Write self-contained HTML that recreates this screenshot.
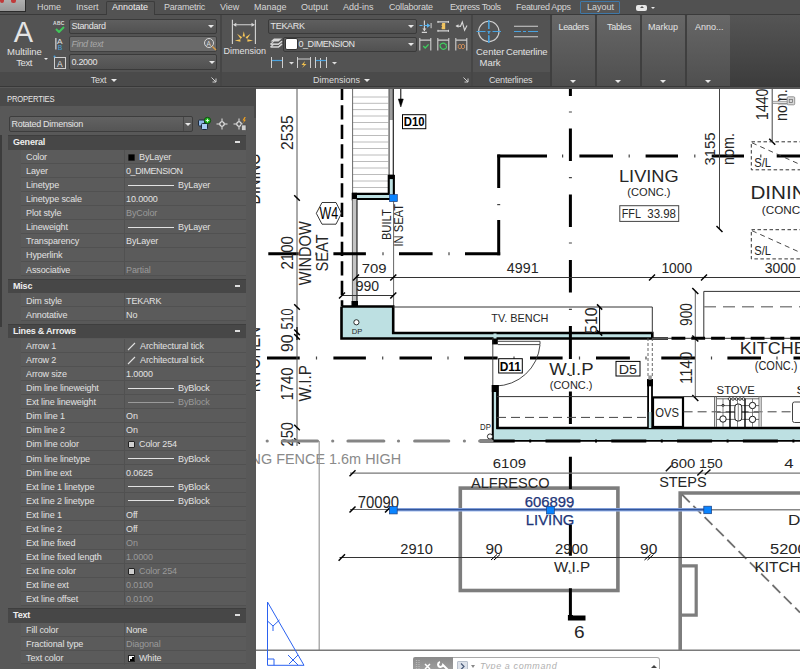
<!DOCTYPE html>
<html><head><meta charset="utf-8">
<style>
*{margin:0;padding:0;box-sizing:border-box}
html,body{width:800px;height:669px;overflow:hidden;background:#535353;font-family:"Liberation Sans",sans-serif;}
.a{position:absolute;white-space:nowrap}
#tabs{position:absolute;left:0;top:0;width:800px;height:15px;background:#515151;border-bottom:1px solid #3a3a3a}
.tab{position:absolute;top:2px;font-size:9px;color:#d6d6d6;line-height:11px}
#ribbon{position:absolute;left:0;top:15px;width:800px;height:73px;background:#535353}
.ptitle{position:absolute;top:57px;height:14px;background:#4a4a4a}
.pt{position:absolute;font-size:9px;color:#dcdcdc;line-height:10px}
.dd{position:absolute;height:15px;background:linear-gradient(#5f5f5f,#515151);border:1px solid #3a3a3a;border-radius:2px;font-size:9px;color:#e6e6e6;line-height:13px;padding-left:1.5px;letter-spacing:-0.3px}
.arr{position:absolute;width:0;height:0;border-left:3px solid transparent;border-right:3px solid transparent;border-top:3px solid #e8e8e8}
.cp{position:absolute;top:0;height:71px;background:linear-gradient(#676767,#4f4f4f);border-radius:1px}
#props{position:absolute;left:0;top:88px;width:256px;height:581px;background:#575757}
.row{position:absolute;white-space:nowrap;left:21px;width:225px;height:14px;border-bottom:1px solid #515151;background:#5b5b5b}
.row .l{position:absolute;left:5px;top:1.5px;font-size:9px;color:#e2e2e2;line-height:12px;letter-spacing:-0.12px}
.row .v{position:absolute;left:105px;top:1.5px;font-size:9px;color:#e2e2e2;line-height:12px;letter-spacing:-0.12px}
.row .sp{position:absolute;left:103px;top:0;width:1px;height:14px;background:#515151}
.row .g{color:#9a9a9a}
.hdr{position:absolute;left:8px;width:238px;height:14px;letter-spacing:-0.2px;background:#474747;box-shadow:inset 0 1px 0 #3e3e3e;font-size:9px;font-weight:bold;color:#eeeeee;line-height:14px;padding-left:5px}
.hdr b{position:absolute;right:6px;top:6px;width:5px;height:1.5px;background:#ddd}
</style></head><body>

<!-- TAB BAR -->
<div id="tabs">
  <div class="a" style="left:0;top:0;width:26px;height:12px;background:linear-gradient(#b0b0b0,#999);border-right:1px solid #2b2b2b;border-bottom:1px solid #2b2b2b"></div>
  <div class="a" style="left:0;top:0;width:4px;height:3px;background:#c03a3a;border-radius:0 0 2px 2px"></div>
  <div class="a" style="left:11px;top:0;width:5px;height:3px;background:#c03a3a;border-radius:0 0 2px 2px"></div>
  <div class="tab" style="left:37px">Home</div>
  <div class="tab" style="left:76px">Insert</div>
  <div class="a" style="left:106px;top:1px;width:49px;height:14px;background:#535353;border:1px solid #3c3c3c;border-bottom:none;border-radius:2px 2px 0 0"></div>
  <div class="tab" style="left:112px;color:#f0f0f0">Annotate</div>
  <div class="tab" style="left:164px;letter-spacing:-0.25px">Parametric</div>
  <div class="tab" style="left:220px">View</div>
  <div class="tab" style="left:254px">Manage</div>
  <div class="tab" style="left:301px">Output</div>
  <div class="tab" style="left:343px">Add-ins</div>
  <div class="tab" style="left:389px;letter-spacing:-0.2px">Collaborate</div>
  <div class="tab" style="left:450px;letter-spacing:-0.4px">Express Tools</div>
  <div class="tab" style="left:516px;letter-spacing:-0.3px">Featured Apps</div>
  <div class="a" style="left:580px;top:1px;width:40px;height:13px;background:#565656;border:1px solid #3f78a8;border-radius:1px"></div>
  <div class="tab" style="left:587px">Layout</div>
  <div class="a" style="left:636px;top:5px;width:11px;height:6px;background:#e8e8e8;border-radius:2px"></div>
  <div class="a" style="left:640px;top:6px;width:0;height:0;border-left:2px solid transparent;border-right:2px solid transparent;border-bottom:2px solid #555"></div>
  <div class="arr" style="left:651px;top:7px;border-left-width:2px;border-right-width:2px;border-top-width:2px"></div>
</div>

<!-- RIBBON -->
<div id="ribbon">
  <!-- Text panel -->
  <div class="a" style="left:0;top:57px;width:220px;height:14px;background:#4a4a4a"></div>
  <div class="a" style="left:13.7px;top:2.8px;font-size:29px;line-height:29px;color:#e4e4e4">A</div>
  <div class="a" style="left:7px;top:32px;font-size:9.5px;line-height:9.5px;color:#e2e2e2">Multiline</div>
  <div class="a" style="left:16.3px;top:43px;font-size:9.5px;line-height:9.5px;color:#e2e2e2;letter-spacing:-0.45px">Text</div>
  <div class="arr" style="left:43.8px;top:42.5px;border-left-width:2.2px;border-right-width:2.2px;border-top-width:2.5px"></div>
  <div class="a" style="left:53px;top:6px;font-size:5px;line-height:5px;font-weight:bold;color:#dcdcdc;letter-spacing:0.3px">ABC</div>
  <svg class="a" style="left:55px;top:11px" width="10" height="7"><path d="M1 3 L4 6 L9 1" stroke="#3fc85a" stroke-width="2" fill="none"/></svg>
  <div class="dd" style="left:69px;top:3.9px;width:148px;height:15.5px">Standard</div>
  <div class="arr" style="left:208px;top:10px;border-left-width:3.5px;border-right-width:3.5px;border-top-width:3.5px"></div>
  <svg class="a" style="left:54px;top:22px" width="12" height="15"><rect x="1.2" y="1" width="1.3" height="11.5" fill="#cfcfcf"/><text x="3" y="7.2" font-size="7.6" fill="#e0e0e0" font-family="Liberation Sans" textLength="5.5" lengthAdjust="spacingAndGlyphs">A</text><text x="3.8" y="12.6" font-size="7.4" fill="#4aa3df" font-family="Liberation Sans" textLength="4.5" lengthAdjust="spacingAndGlyphs">B</text></svg>
  <div class="dd" style="left:69px;top:21.3px;width:148px;height:15.8px;line-height:14px;background:#6a6a6a;border-color:#404040;color:#a8a8a8;font-style:italic">Find text</div>
  <svg class="a" style="left:203px;top:21.5px" width="14" height="14"><circle cx="6" cy="6" r="4.5" stroke="#d8d8d8" stroke-width="1" fill="none"/><text x="3.5" y="8.5" font-size="6.5" fill="#d8d8d8" font-family="Liberation Sans">A</text><path d="M9.5 9.5 L13 13" stroke="#d79a46" stroke-width="1.5"/></svg>
  <svg class="a" style="left:53px;top:40px" width="14" height="15"><rect x="1.5" y="2.5" width="11" height="11" stroke="#cfcfcf" stroke-width="1" fill="none"/><text x="4" y="11.5" font-size="8.5" fill="#e0e0e0" font-family="Liberation Sans">A</text><circle cx="1.5" cy="1.5" r="1" fill="#4aa3df"/></svg>
  <div class="dd" style="left:69px;top:39.2px;width:148px;height:15.8px;line-height:14px">0.2000</div>
  <div class="arr" style="left:209px;top:46px;border-left-width:3.5px;border-right-width:3.5px;border-top-width:3.5px"></div>
  <div class="pt" style="left:90.8px;top:60px;letter-spacing:-0.3px">Text</div>
  <div class="arr" style="left:111px;top:64px"></div>
  <svg class="a" style="left:211px;top:62px" width="6" height="6"><path d="M0.5 0.5 L5 5 M5 1.5 L5 5 L1.5 5" stroke="#cfcfcf" stroke-width="1" fill="none"/></svg>
  <div class="a" style="left:220px;top:0;width:2px;height:71px;background:#464646"></div>

  <!-- Dimensions panel -->
  <div class="a" style="left:222px;top:57px;width:250px;height:14px;background:#4a4a4a"></div>
  <svg class="a" style="left:230px;top:4px" width="28" height="26">
    <path d="M2.4 0.7 V24.9 M25.4 0.7 V24.9 M4 5.75 H24" stroke="#d4d4d4" stroke-width="1.1" fill="none"/>
    <path d="M2.9 5.75 l3.4 -2 v4z M24.9 5.75 l-3.4 -2 v4z" fill="#d4d4d4"/>
    <path d="M13.8 12.2 L12.6 17.6 H15 Z M7.1 14.8 L10.6 19.9 L12.1 18.2 Z M20.6 14.8 L17.1 19.9 L15.6 18.2 Z M4.8 21.5 L10.4 20.3 V22.7 Z M23 21.5 L17.4 20.3 V22.7 Z" fill="#f5c65a"/>
  </svg>
  <div class="a" style="left:223.5px;top:32.3px;font-size:9px;line-height:9px;color:#e2e2e2">Dimension</div>
  <div class="dd" style="left:268px;top:3.9px;width:149px;height:15.5px">TEKARK</div>
  <div class="arr" style="left:408px;top:10px;border-left-width:3.5px;border-right-width:3.5px;border-top-width:3.5px"></div>
  <svg class="a" style="left:269px;top:22px" width="14" height="13"><path d="M1.5 4.5 L5 1.5 H13 L9.5 4.5 Z" fill="#d8d8d8"/><path d="M1.5 7.2 L5 4.2 M9.5 7.2 L13 4.2 M1.5 7.2 H9.5 M1.5 10 L5 7 M9.5 10 L13 7 M1.5 10 H9.5" stroke="#d0d0d0" stroke-width="1.1" fill="none"/><path d="M1.5 7.2 H9.5 L13 4.2 M1.5 10 H9.5 L13 7" stroke="#d8d8d8" stroke-width="1.2" fill="none"/></svg>
  <div class="dd" style="left:283px;top:21.5px;width:134px;padding-left:14.5px;letter-spacing:-0.45px">0_DIMENSION</div>
  <div class="a" style="left:285px;top:23px;width:12.5px;height:12px;background:#fff;border:1px solid #333;border-radius:2px"></div>
  <div class="arr" style="left:408px;top:28px;border-left-width:3.5px;border-right-width:3.5px;border-top-width:3.5px"></div>
  <svg class="a" style="left:270px;top:41px" width="70" height="13">
    <path d="M1.5 1 V12 M12.5 1 V12 M2 4.5 H12" stroke="#cfcfcf" stroke-width="1" fill="none"/>
    <path d="M2 4.5 H12" stroke="#4aa3df" stroke-width="1.2"/>
    <path d="M19 6 h5 l-2.5 2.5z" fill="#dcdcdc"/>
    <path d="M27.5 1 V12 M40.5 1 V12 M28 3 H40" stroke="#cfcfcf" stroke-width="1" fill="none"/>
    <path d="M35 5 L31.5 9 L34 9 L32 12 L36.5 8 L34 8 Z" fill="#f2c14e"/>
    <path d="M45.5 1 V12 M56.5 1 V12 M50.5 2 V12 M46 4.5 H56" stroke="#cfcfcf" stroke-width="1" fill="none"/>
    <path d="M46 4.5 H56" stroke="#4aa3df" stroke-width="1.2"/>
    <path d="M62 6 h5 l-2.5 2.5z" fill="#dcdcdc"/>
  </svg>
  <svg class="a" style="left:419px;top:5px" width="50" height="32">
    <path d="M5.4 0.6 V11 M2.8 12.4 H8" stroke="#d4d4d4" stroke-width="1.1" fill="none"/>
    <path d="M3.4 8.6 H7.4 L5.4 11 Z" fill="#d4d4d4"/>
    <path d="M0.5 5.5 H3.5 M5 5.5 H9" stroke="#5ab4f0" stroke-width="1.1" fill="none"/>
    <path d="M11.3 5.5 L8 3.3 V7.7 Z" fill="#5ab4f0"/>
    <path d="M12.1 3 V8.2" stroke="#d4d4d4" stroke-width="1"/>
    <path d="M18.5 1.9 H30 M18.5 10.8 H30" stroke="#d4d4d4" stroke-width="1.2" fill="none"/>
    <path d="M19 0.9 V2.9 M29.5 0.9 V2.9 M19 9.8 V11.8 M29.5 9.8 V11.8" stroke="#d4d4d4" stroke-width="1"/>
    <path d="M23 2.9 H26.2 V9.3 H23 L22.4 8 L23.2 6.6 L22.4 5.2 L23.2 3.9 Z" fill="#f2c560"/>
    <path d="M37.5 6 L41.5 6.3 L43.3 2 L45.6 10.2 L48 5.5" stroke="#d8d8d8" stroke-width="1.1" fill="none"/>
    <path d="M36.5 6 L39.5 4.3 V7.7 Z" fill="#d8d8d8"/>
    <path d="M0.8 18 V30.5 M11.8 18 V30.5 M1 20.1 H11.6" stroke="#cfcfcf" stroke-width="1.1" fill="none"/>
    <path d="M4.2 26 L6.2 28 L9.6 24.4" stroke="#3fcf5f" stroke-width="1.3" fill="none"/>
    <path d="M18.8 18 V30.5 M29.8 18 V30.5 M19 20.1 H29.6" stroke="#cfcfcf" stroke-width="1.1" fill="none"/>
    <path d="M21.5 27 A3 2.4 0 0 1 26.5 24.3 M27 25.5 A3 2.4 0 0 1 22 28.2" stroke="#3fcf5f" stroke-width="1.1" fill="none"/>
    <circle cx="21.6" cy="27.3" r="0.9" fill="#3fcf5f"/><circle cx="26.9" cy="24.6" r="0.9" fill="#3fcf5f"/>
    <path d="M36.8 18 V30.5 M47.8 18 V30.5 M37 20.1 H47.6" stroke="#cfcfcf" stroke-width="1.1" fill="none"/>
    <path d="M39.3 26.5 a1.7 1.5 0 1 1 3.1 0 a1.7 1.5 0 1 1 -3.1 0 M42.4 26.5 a1.7 1.5 0 1 1 3.1 0 a1.7 1.5 0 1 1 -3.1 0" stroke="#d9935a" stroke-width="1" fill="none"/>
  </svg>
  <div class="pt" style="left:313px;top:60px">Dimensions</div>
  <div class="arr" style="left:364px;top:64px"></div>
  <svg class="a" style="left:463px;top:62px" width="6" height="6"><path d="M0.5 0.5 L5 5 M5 1.5 L5 5 L1.5 5" stroke="#cfcfcf" stroke-width="1" fill="none"/></svg>
  <div class="a" style="left:471px;top:0;width:2px;height:71px;background:#464646"></div>

  <!-- Centerlines panel -->
  <div class="a" style="left:473px;top:57px;width:77px;height:14px;background:#4a4a4a"></div>
  <svg class="a" style="left:475px;top:4px" width="75" height="26">
    <circle cx="13.8" cy="12.5" r="10.2" stroke="#cfcfcf" stroke-width="1.1" fill="none"/>
    <path d="M1.5 12.5 H26 M13.8 1 V24" stroke="#4aa3df" stroke-width="1.2" stroke-dasharray="9 2 3 2 9" fill="none"/>
    <path d="M13.8 1 V24" stroke="#4aa3df" stroke-width="1.2" stroke-dasharray="9 2 2 2 9" fill="none"/>
    <path d="M39 7.2 H63 M39 17.7 H63" stroke="#d0d0d0" stroke-width="1.1" fill="none"/>
    <path d="M39 12.5 H63" stroke="#4aa3df" stroke-width="1.1" stroke-dasharray="7 2 3 2 10" fill="none"/>
  </svg>
  <div class="a" style="left:476px;top:32px;font-size:9.5px;line-height:9.5px;color:#e2e2e2">Center</div>
  <div class="a" style="left:479.5px;top:43px;font-size:9.5px;line-height:9.5px;color:#e2e2e2">Mark</div>
  <div class="a" style="left:506px;top:32px;font-size:9.5px;line-height:9.5px;color:#e2e2e2;letter-spacing:-0.2px">Centerline</div>
  <div class="pt" style="left:489px;top:60px;letter-spacing:-0.2px">Centerlines</div>

  <!-- collapsed panels -->
  <div class="a" style="left:549.5px;top:0;width:2px;height:71px;background:#3f3f3f"></div>
  <div class="cp" style="left:551.5px;width:43px"></div>
  <div class="a" style="left:594.6px;top:0;width:2px;height:71px;background:#3f3f3f"></div>
  <div class="cp" style="left:596.6px;width:43.7px"></div>
  <div class="a" style="left:640.3px;top:0;width:1.3px;height:71px;background:#3f3f3f"></div>
  <div class="cp" style="left:641.6px;width:43.7px"></div>
  <div class="a" style="left:685.3px;top:0;width:1.7px;height:71px;background:#3f3f3f"></div>
  <div class="cp" style="left:687px;width:43.3px"></div>
  <div class="a" style="left:730.3px;top:0;width:70px;height:71px;background:linear-gradient(#555,#3c3c3c)"></div>
  <div class="pt" style="left:558.5px;top:7px;color:#e4e4e4;letter-spacing:-0.35px">Leaders</div>
  <div class="pt" style="left:607px;top:7px;color:#e4e4e4;letter-spacing:-0.3px">Tables</div>
  <div class="pt" style="left:648px;top:7px;color:#e4e4e4">Markup</div>
  <div class="pt" style="left:695px;top:7px;color:#e4e4e4">Anno...</div>
  <div class="arr" style="left:570px;top:65px"></div>
  <div class="arr" style="left:615px;top:65px"></div>
  <div class="arr" style="left:660px;top:65px"></div>
  <div class="arr" style="left:705px;top:65px"></div>
  <div class="a" style="left:0;top:71px;width:800px;height:1px;background:#383838"></div>
  <div class="a" style="left:0;top:72px;width:800px;height:2px;background:#575757"></div>
</div>

<!-- PROPERTIES -->
<div id="props">
<div class="a" style="left:0;top:0;width:256px;height:18px;background:#4a4a4a"></div>
<div class="a" style="left:7px;top:5.5px;font-size:9px;line-height:10px;color:#e6e6e6;letter-spacing:-0.2px;transform:scaleX(0.85);transform-origin:0 0">PROPERTIES</div>
<div class="a" style="left:0;top:18px;width:254px;height:563px;background:#585858;border-radius:3px 3px 0 0"></div>
<div class="a" style="left:254px;top:0;width:2px;height:30px;background:#4a4a4a"></div>
<div class="a" style="left:0;top:47px;width:1.5px;height:192px;background:#3c3c3c"></div>
<div class="dd" style="left:8.5px;top:28px;width:184px;height:16px;line-height:14px;padding-left:2px;background:linear-gradient(#626262,#555);border-color:#3d3d3d;color:#e4e4e4;letter-spacing:-0.3px">Rotated Dimension</div>
<div class="a" style="left:183px;top:29px;width:1px;height:14px;background:#474747"></div>
<div class="arr" style="left:185px;top:35px"></div>
<svg class="a" style="left:196px;top:28px" width="56" height="16">
 <rect x="2.5" y="4" width="6" height="6" rx="1" fill="#8fb7e8" stroke="#1d2a3a" stroke-width="1"/>
 <rect x="5.5" y="7.5" width="6" height="6" rx="1" fill="#a9cbf2" stroke="#1d2a3a" stroke-width="1"/>
 <circle cx="11.5" cy="4.5" r="3.2" fill="#1db31d" stroke="#0c3a0c" stroke-width="0.8"/>
 <path d="M11.5 2.8 v3.4 M9.8 4.5 h3.4" stroke="#eaffea" stroke-width="0.9"/>
 <circle cx="26" cy="8" r="2.2" fill="none" stroke="#e6e6e6" stroke-width="1.1"/>
 <path d="M20.5 8 h3.3 M28.2 8 h3.3 M26 2.5 v3.3 M26 10.2 v3.3" stroke="#e6e6e6" stroke-width="1"/>
 <circle cx="43" cy="8" r="2.2" fill="none" stroke="#e6e6e6" stroke-width="1.1"/>
 <path d="M37.5 8 h3.3 M45.2 8 h1.5 M43 2.5 v3.3 M43 10.2 v3.3" stroke="#e6e6e6" stroke-width="1"/>
 <path d="M48.5 1 L46.5 4.5 L48.2 4.5 L46.8 7.5 L50 3.8 L48.4 3.8 L49.8 1 Z" fill="#f0a020"/>
 <rect x="45.5" y="9" width="4.5" height="5.5" fill="#cfcfcf" stroke="#444" stroke-width="0.6"/>
</svg>
<div class="hdr" style="top:47.00px;height:14.50px;line-height:14.50px">General<b></b></div>
<div class="row" style="top:61.50px;height:14.07px"><span class="l">Color</span><span class="sp"></span><span class="v"><span style="position:absolute;left:2px;top:2.5px;width:7px;height:7px;background:#000;border:1px solid #222;border-radius:1px"></span><span style="position:absolute;left:13px;color:#e2e2e2">ByLayer</span></span></div>
<div class="row" style="top:75.57px;height:14.07px"><span class="l">Layer</span><span class="sp"></span><span class="v" style="letter-spacing:-0.4px">0_DIMENSION</span></div>
<div class="row" style="top:89.64px;height:14.07px"><span class="l">Linetype</span><span class="sp"></span><span class="v"><span style="position:absolute;left:2px;top:5.5px;width:46px;height:1px;background:#e2e2e2"></span><span style="position:absolute;left:52px;color:#e2e2e2">ByLayer</span></span></div>
<div class="row" style="top:103.71px;height:14.07px"><span class="l">Linetype scale</span><span class="sp"></span><span class="v">10.0000</span></div>
<div class="row" style="top:117.78px;height:14.07px"><span class="l">Plot style</span><span class="sp"></span><span class="v"><span class="g">ByColor</span></span></div>
<div class="row" style="top:131.85px;height:14.07px"><span class="l">Lineweight</span><span class="sp"></span><span class="v"><span style="position:absolute;left:2px;top:5.5px;width:46px;height:1px;background:#e2e2e2"></span><span style="position:absolute;left:52px;color:#e2e2e2">ByLayer</span></span></div>
<div class="row" style="top:145.92px;height:14.07px"><span class="l">Transparency</span><span class="sp"></span><span class="v">ByLayer</span></div>
<div class="row" style="top:159.99px;height:14.07px"><span class="l">Hyperlink</span><span class="sp"></span><span class="v"></span></div>
<div class="row" style="top:174.06px;height:14.07px"><span class="l">Associative</span><span class="sp"></span><span class="v"><span class="g">Partial</span></span></div>
<div class="hdr" style="top:191.20px;height:14.10px;line-height:14.10px">Misc<b></b></div>
<div class="row" style="top:205.30px;height:14.07px"><span class="l">Dim style</span><span class="sp"></span><span class="v">TEKARK</span></div>
<div class="row" style="top:219.37px;height:14.07px"><span class="l">Annotative</span><span class="sp"></span><span class="v">No</span></div>
<div class="hdr" style="top:236.30px;height:14.20px;line-height:14.20px">Lines &amp; Arrows<b></b></div>
<div class="row" style="top:250.50px;height:14.07px"><span class="l">Arrow 1</span><span class="sp"></span><span class="v"><svg style="position:absolute;left:1px;top:2px" width="10" height="9"><path d="M1 8 L8 1" stroke="#e2e2e2" stroke-width="1.1"/></svg><span style="position:absolute;left:14px">Architectural tick</span></span></div>
<div class="row" style="top:264.57px;height:14.07px"><span class="l">Arrow 2</span><span class="sp"></span><span class="v"><svg style="position:absolute;left:1px;top:2px" width="10" height="9"><path d="M1 8 L8 1" stroke="#e2e2e2" stroke-width="1.1"/></svg><span style="position:absolute;left:14px">Architectural tick</span></span></div>
<div class="row" style="top:278.64px;height:14.07px"><span class="l">Arrow size</span><span class="sp"></span><span class="v">1.0000</span></div>
<div class="row" style="top:292.71px;height:14.07px"><span class="l">Dim line lineweight</span><span class="sp"></span><span class="v"><span style="position:absolute;left:2px;top:5.5px;width:46px;height:1px;background:#e2e2e2"></span><span style="position:absolute;left:52px;color:#e2e2e2">ByBlock</span></span></div>
<div class="row" style="top:306.78px;height:14.07px"><span class="l">Ext line lineweight</span><span class="sp"></span><span class="v"><span style="position:absolute;left:2px;top:5.5px;width:46px;height:1px;background:#9a9a9a"></span><span style="position:absolute;left:52px;color:#9a9a9a">ByBlock</span></span></div>
<div class="row" style="top:320.85px;height:14.07px"><span class="l">Dim line 1</span><span class="sp"></span><span class="v">On</span></div>
<div class="row" style="top:334.92px;height:14.07px"><span class="l">Dim line 2</span><span class="sp"></span><span class="v">On</span></div>
<div class="row" style="top:348.99px;height:14.07px"><span class="l">Dim line color</span><span class="sp"></span><span class="v"><span style="position:absolute;left:2px;top:2.5px;width:7px;height:7px;background:#d0d0d0;border:1px solid #222;border-radius:1px"></span><span style="position:absolute;left:13px;color:#e2e2e2">Color 254</span></span></div>
<div class="row" style="top:363.06px;height:14.07px"><span class="l">Dim line linetype</span><span class="sp"></span><span class="v"><span style="position:absolute;left:2px;top:5.5px;width:46px;height:1px;background:#e2e2e2"></span><span style="position:absolute;left:52px;color:#e2e2e2">ByBlock</span></span></div>
<div class="row" style="top:377.13px;height:14.07px"><span class="l">Dim line ext</span><span class="sp"></span><span class="v">0.0625</span></div>
<div class="row" style="top:391.20px;height:14.07px"><span class="l">Ext line 1 linetype</span><span class="sp"></span><span class="v"><span style="position:absolute;left:2px;top:5.5px;width:46px;height:1px;background:#e2e2e2"></span><span style="position:absolute;left:52px;color:#e2e2e2">ByBlock</span></span></div>
<div class="row" style="top:405.27px;height:14.07px"><span class="l">Ext line 2 linetype</span><span class="sp"></span><span class="v"><span style="position:absolute;left:2px;top:5.5px;width:46px;height:1px;background:#e2e2e2"></span><span style="position:absolute;left:52px;color:#e2e2e2">ByBlock</span></span></div>
<div class="row" style="top:419.34px;height:14.07px"><span class="l">Ext line 1</span><span class="sp"></span><span class="v">Off</span></div>
<div class="row" style="top:433.41px;height:14.07px"><span class="l">Ext line 2</span><span class="sp"></span><span class="v">Off</span></div>
<div class="row" style="top:447.48px;height:14.07px"><span class="l">Ext line fixed</span><span class="sp"></span><span class="v"><span class="g">On</span></span></div>
<div class="row" style="top:461.55px;height:14.07px"><span class="l">Ext line fixed length</span><span class="sp"></span><span class="v"><span class="g">1.0000</span></span></div>
<div class="row" style="top:475.62px;height:14.07px"><span class="l">Ext line color</span><span class="sp"></span><span class="v"><span style="position:absolute;left:2px;top:2.5px;width:7px;height:7px;background:#cfcfcf;border:1px solid #222;border-radius:1px"></span><span style="position:absolute;left:13px;color:#9a9a9a">Color 254</span></span></div>
<div class="row" style="top:489.69px;height:14.07px"><span class="l">Ext line ext</span><span class="sp"></span><span class="v"><span class="g">0.0100</span></span></div>
<div class="row" style="top:503.76px;height:14.07px"><span class="l">Ext line offset</span><span class="sp"></span><span class="v"><span class="g">0.0100</span></span></div>
<div class="hdr" style="top:520.40px;height:14.30px;line-height:14.30px">Text<b></b></div>
<div class="row" style="top:534.70px;height:13.93px"><span class="l">Fill color</span><span class="sp"></span><span class="v">None</span></div>
<div class="row" style="top:548.63px;height:13.93px"><span class="l">Fractional type</span><span class="sp"></span><span class="v"><span class="g">Diagonal</span></span></div>
<div class="row" style="top:562.56px;height:13.93px"><span class="l">Text color</span><span class="sp"></span><span class="v"><span style="position:absolute;left:2px;top:2.5px;width:7px;height:7px;background:linear-gradient(135deg,#fff 50%,#000 50%);border:1px solid #222"></span><span style="position:absolute;left:13px">White</span></span></div>
</div>

<!-- DRAWING -->
<div class="a" style="left:256px;top:89px;width:544px;height:580px;background:#fff;overflow:hidden">
<!--DRAW-->
<svg class="a" style="left:0;top:0" width="544" height="580" viewBox="256 89 544 580" font-family="Liberation Sans">
<rect x="341.5" y="306.5" width="51.7" height="32" fill="#bde0e2" stroke="none" stroke-width="1" />
<rect x="393" y="333" width="259.5" height="5.5" fill="#bde0e2" stroke="none" stroke-width="1" />
<rect x="352.4" y="194" width="40" height="5.5" fill="#bde0e2" stroke="none" stroke-width="1" />
<rect x="389.5" y="176" width="3.5" height="20" fill="#bde0e2" stroke="none" stroke-width="1" />
<rect x="492.5" y="428" width="307.5" height="13" fill="#bde0e2" stroke="none" stroke-width="1" />
<rect x="492.5" y="385" width="5" height="43" fill="#bde0e2" stroke="none" stroke-width="1" />
<rect x="460.3" y="488.1" width="157.6" height="102.4" fill="none" stroke="#7d7d7d" stroke-width="3.6" />
<path d="M680.2 650 V493 H800" stroke="#7d7d7d" stroke-width="3.6" fill="none" />
<path d="M680.2 565.8 H696.2 V615.2 H680.2" stroke="#7d7d7d" stroke-width="3.2" fill="none" />
<path d="M682 494.5 L800 612.5" stroke="#707070" stroke-width="1.8" fill="none" stroke-dasharray="11 5"/>
<line x1="352.5" y1="97" x2="388.5" y2="97" stroke="#bcbcbc" stroke-width="1" />
<line x1="352.5" y1="103.3" x2="388.5" y2="103.3" stroke="#bcbcbc" stroke-width="1" />
<line x1="352.5" y1="109.6" x2="388.5" y2="109.6" stroke="#bcbcbc" stroke-width="1" />
<line x1="352.5" y1="116" x2="388.5" y2="116" stroke="#bcbcbc" stroke-width="1" />
<line x1="352.5" y1="122.5" x2="388.5" y2="122.5" stroke="#bcbcbc" stroke-width="1" />
<line x1="352.5" y1="129" x2="388.5" y2="129" stroke="#bcbcbc" stroke-width="1" />
<line x1="352.5" y1="135.5" x2="388.5" y2="135.5" stroke="#bcbcbc" stroke-width="1" />
<line x1="352.5" y1="142" x2="388.5" y2="142" stroke="#bcbcbc" stroke-width="1" />
<line x1="352.5" y1="148.5" x2="388.5" y2="148.5" stroke="#bcbcbc" stroke-width="1" />
<line x1="352.5" y1="155" x2="388.5" y2="155" stroke="#bcbcbc" stroke-width="1" />
<line x1="352.5" y1="161.5" x2="388.5" y2="161.5" stroke="#bcbcbc" stroke-width="1" />
<line x1="352.5" y1="168" x2="388.5" y2="168" stroke="#bcbcbc" stroke-width="1" />
<line x1="352.5" y1="174.5" x2="388.5" y2="174.5" stroke="#bcbcbc" stroke-width="1" />
<line x1="352.5" y1="181" x2="388.5" y2="181" stroke="#bcbcbc" stroke-width="1" />
<line x1="352.5" y1="187.5" x2="388.5" y2="187.5" stroke="#bcbcbc" stroke-width="1" />
<line x1="352.6" y1="89" x2="352.6" y2="193" stroke="#6a6a6a" stroke-width="1" />
<line x1="388.8" y1="89" x2="388.8" y2="176" stroke="#9a9a9a" stroke-width="1" />
<rect x="389.3" y="89" width="3.9" height="31" fill="#9d9d9d" stroke="none" stroke-width="1" />
<line x1="389.3" y1="89" x2="389.3" y2="176" stroke="#555" stroke-width="0.8" />
<line x1="393.3" y1="89" x2="393.3" y2="176" stroke="#222" stroke-width="1.2" />
<path d="M391.3 175 V196.4 H352" stroke="#000" stroke-width="7.2" fill="none" />
<path d="M391.3 178.5 V196.4 H355.5" stroke="#bde0e2" stroke-width="3" fill="none" />
<rect x="351.7" y="192.8" width="5.3" height="7.6" fill="#000" stroke="none" stroke-width="1" />
<rect x="388.2" y="174.6" width="6.2" height="4.5" fill="#000" stroke="none" stroke-width="1" />
<rect x="352.4" y="199" width="4.6" height="107" fill="#c4c4c4" stroke="none" stroke-width="1" />
<line x1="352.4" y1="199" x2="352.4" y2="306" stroke="#666" stroke-width="1" />
<line x1="357" y1="199" x2="357" y2="306" stroke="#000" stroke-width="1" />
<rect x="351.5" y="301" width="6.5" height="6" fill="#000" stroke="none" stroke-width="1" />
<rect x="389.5" y="194.6" width="7.8" height="7" fill="#0a84ff" stroke="#1a3f80" stroke-width="0.7" />
<path d="M342 89.0 V100.0 M342 105.3 V119.5 M342 124.8 V139.0 M342 144.3 V158.5 M342 163.8 V178.0 M342 183.3 V197.5 M342 202.8 V217.0 M342 222.3 V236.5 M342 241.8 V256.0 M342 261.3 V275.5 M342 280.8 V295.0 M342 300.3 V306.0" stroke="#000" stroke-width="2.6" fill="none" />
<path d="M497.3 156.1 H547 M579.4 156.1 H613 M645.6 156.1 H678 M711.7 156.1 H744 M776.7 156.1 H800" stroke="#000" stroke-width="3" fill="none" />
<path d="M562.0 156.1 H563.2 M628.6 156.1 H629.8000000000001 M694.1999999999999 156.1 H695.4 M760.1999999999999 156.1 H761.4" stroke="#444" stroke-width="3" fill="none" />
<path d="M498.7 154.6 V188 M498.7 220 V255.3" stroke="#000" stroke-width="3" fill="none" />
<path d="M498.7 204.0 V205.2" stroke="#444" stroke-width="3" fill="none" />
<path d="M268.3 253.7 H298.6 M333.4 253.7 H365.9 M399 253.7 H432.6 M465 253.7 H500.2" stroke="#000" stroke-width="3" fill="none" />
<path d="M315.4 253.7 H316.6 M382.4 253.7 H383.6 M448.4 253.7 H449.6" stroke="#444" stroke-width="3" fill="none" />
<path d="M570.4 89 V96 M570.4 128.4 V160.9 M570.4 194.5 V227 M570.4 260 V292.5 M570.4 326 V359 M570.4 391.6 V424 M570.4 456.7 V489 M570.4 524.4 V555.8 M570.4 588.3 V619.7" stroke="#000" stroke-width="3" fill="none" />
<path d="M570.4 111.4 V112.6 M570.4 177.1 V178.29999999999998 M570.4 242.4 V243.6 M570.4 308.7 V309.90000000000003 M570.4 374.7 V375.90000000000003 M570.4 440.4 V441.6 M570.4 506.4 V507.6 M570.4 572.4 V573.6" stroke="#444" stroke-width="3" fill="none" />
<path d="M267 358 H299.7 M333.4 358 H365.9 M399.5 358 H432 M464 358 H497.6 M530 358 H562.6 M596 358 H629.9 M661.3 358 H695 M727.4 358 H761 M793.5 358 H800" stroke="#000" stroke-width="3" fill="none" />
<path d="M315.9 358 H317.1 M382.09999999999997 358 H383.3 M447.4 358 H448.6 M513.4 358 H514.6 M578.9 358 H580.1 M645.4 358 H646.6 M710.9 358 H712.1 M776.4 358 H777.6" stroke="#444" stroke-width="3" fill="none" />
<path d="M570.4 615 V618 H585.5" stroke="#000" stroke-width="5" fill="none" />
<line x1="297" y1="89" x2="297" y2="446" stroke="#555" stroke-width="1" />
<path d="M294.2 195.2 L299.8 200.8" stroke="#000" stroke-width="1.5" fill="none" />
<path d="M294.2 304.2 L299.8 309.8" stroke="#000" stroke-width="1.5" fill="none" />
<path d="M294.2 329.5 L299.8 335.1" stroke="#000" stroke-width="1.5" fill="none" />
<path d="M294.2 334.0 L299.8 339.6" stroke="#000" stroke-width="1.5" fill="none" />
<path d="M294.2 424.7 L299.8 430.3" stroke="#000" stroke-width="1.5" fill="none" />
<path d="M294.2 438.2 L299.8 443.8" stroke="#000" stroke-width="1.5" fill="none" />
<line x1="297" y1="327" x2="297" y2="340" stroke="#000" stroke-width="1.2" />
<text transform="translate(293.00,149.00) rotate(-90)" x="-1.03" y="0" font-size="17.14" fill="#262626" font-weight="normal" textLength="34.71" lengthAdjust="spacingAndGlyphs">2535</text>
<text transform="translate(293.00,268.50) rotate(-90)" x="-0.99" y="0" font-size="16.43" fill="#262626" font-weight="normal" textLength="33.44" lengthAdjust="spacingAndGlyphs">2100</text>
<text transform="translate(293.00,328.50) rotate(-90)" x="-0.94" y="0" font-size="15.71" fill="#262626" font-weight="normal" textLength="21.07" lengthAdjust="spacingAndGlyphs">510</text>
<text transform="translate(293.00,351.00) rotate(-90)" x="-0.94" y="0" font-size="15.71" fill="#262626" font-weight="normal" textLength="17.57" lengthAdjust="spacingAndGlyphs">90</text>
<text transform="translate(293.00,399.50) rotate(-90)" x="-0.99" y="0" font-size="16.43" fill="#262626" font-weight="normal" textLength="33.14" lengthAdjust="spacingAndGlyphs">1740</text>
<text transform="translate(292.80,445.50) rotate(-90)" x="-0.97" y="0" font-size="16.14" fill="#262626" font-weight="normal" textLength="24.31" lengthAdjust="spacingAndGlyphs">250</text>
<text transform="translate(310.50,284.40) rotate(-90)" x="-0.96" y="0" font-size="16.00" fill="#262626" font-weight="normal" textLength="64.00" lengthAdjust="spacingAndGlyphs">WINDOW</text>
<text transform="translate(328.30,270.50) rotate(-90)" x="-0.99" y="0" font-size="16.43" fill="#262626" font-weight="normal" textLength="37.14" lengthAdjust="spacingAndGlyphs">SEAT</text>
<text transform="translate(311.00,400.60) rotate(-90)" x="-0.96" y="0" font-size="16.00" fill="#262626" font-weight="normal" textLength="36.40" lengthAdjust="spacingAndGlyphs">W.I.P</text>
<text transform="translate(260.20,203.40) rotate(-90)" x="-1.22" y="0" font-size="20.29" fill="#262626" font-weight="normal" textLength="51.03" lengthAdjust="spacingAndGlyphs">DINING</text>
<text transform="translate(259.80,391.20) rotate(-90)" x="-1.18" y="0" font-size="19.71" fill="#262626" font-weight="normal" textLength="65.47" lengthAdjust="spacingAndGlyphs">KITCHEN</text>
<path d="M316.3 213.3 L322 202.5 H336 L341.5 213.3 L336 224.2 H322 Z" stroke="#222" stroke-width="0.9" fill="none" />
<text x="319.56" y="219.00" font-size="15.71" fill="#000" font-weight="normal" textLength="18.57" lengthAdjust="spacingAndGlyphs" >W4</text>
<line x1="400.8" y1="89" x2="400.8" y2="102" stroke="#000" stroke-width="1" />
<path d="M398.3 99 L403.3 99 L400.8 107 Z" stroke="#000" stroke-width="0.5" fill="#000" />
<rect x="402.5" y="114.7" width="23.3" height="14" fill="#fff" stroke="#000" stroke-width="1" />
<text x="403.75" y="126.30" font-size="12.57" fill="#000" font-weight="bold" textLength="20.76" lengthAdjust="spacingAndGlyphs" >D10</text>
<line x1="393.6" y1="201" x2="393.6" y2="306" stroke="#555" stroke-width="0.9" />
<text transform="translate(390.60,239.30) rotate(-90)" x="-0.77" y="0" font-size="12.86" fill="#222" font-weight="normal" textLength="30.79" lengthAdjust="spacingAndGlyphs">BUILT</text>
<text transform="translate(403.00,245.70) rotate(-90)" x="-0.79" y="0" font-size="13.14" fill="#222" font-weight="normal" textLength="42.41" lengthAdjust="spacingAndGlyphs">IN SEAT</text>
<line x1="356" y1="277.5" x2="800" y2="277.5" stroke="#333" stroke-width="1" />
<line x1="342" y1="295.5" x2="393.3" y2="295.5" stroke="#333" stroke-width="1" />
<path d="M353 280.5 L359 274.5" stroke="#000" stroke-width="1.5" fill="none" />
<path d="M390.3 280.5 L396.3 274.5" stroke="#000" stroke-width="1.5" fill="none" />
<path d="M649 280.5 L655 274.5" stroke="#000" stroke-width="1.5" fill="none" />
<path d="M701 280.5 L707 274.5" stroke="#000" stroke-width="1.5" fill="none" />
<path d="M339 298.5 L345 292.5" stroke="#000" stroke-width="1.5" fill="none" />
<path d="M390.3 298.5 L396.3 292.5" stroke="#000" stroke-width="1.5" fill="none" />
<text x="361.69" y="272.80" font-size="13.43" fill="#262626" font-weight="normal" textLength="24.84" lengthAdjust="spacingAndGlyphs" >709</text>
<text x="355.65" y="290.70" font-size="14.14" fill="#262626" font-weight="normal" textLength="23.41" lengthAdjust="spacingAndGlyphs" >990</text>
<text x="506.86" y="272.80" font-size="14.00" fill="#262626" font-weight="normal" textLength="31.70" lengthAdjust="spacingAndGlyphs" >4991</text>
<text x="661.46" y="272.80" font-size="14.00" fill="#262626" font-weight="normal" textLength="30.60" lengthAdjust="spacingAndGlyphs" >1000</text>
<text x="764.66" y="272.80" font-size="14.00" fill="#262626" font-weight="normal" textLength="31.20" lengthAdjust="spacingAndGlyphs" >3000</text>
<path d="M341.5 306.5 H393.2 V333 H652.3 V338.5 M341.5 306.5 V338.5 H668" stroke="#000" stroke-width="2.6" fill="none" />
<line x1="393.2" y1="307" x2="652.3" y2="307" stroke="#333" stroke-width="1" />
<line x1="652.3" y1="307" x2="652.3" y2="333" stroke="#333" stroke-width="1" />
<circle cx="356.4" cy="322.3" r="2.6" stroke="#000" stroke-width="0.8" fill="#fff"/>
<text x="351.73" y="334.30" font-size="7.86" fill="#262626" font-weight="normal" textLength="10.59" lengthAdjust="spacingAndGlyphs" >DP</text>
<text x="491.30" y="322.00" font-size="11.71" fill="#262626" font-weight="normal" textLength="57.17" lengthAdjust="spacingAndGlyphs" >TV. BENCH</text>
<line x1="599.6" y1="307" x2="599.6" y2="333" stroke="#000" stroke-width="1" />
<path d="M597.0 304.4 L602.2 309.6" stroke="#000" stroke-width="1.5" fill="none" />
<path d="M597.0 330.4 L602.2 335.6" stroke="#000" stroke-width="1.5" fill="none" />
<text transform="translate(597.20,333.00) rotate(-90)" x="-0.93" y="0" font-size="15.57" fill="#262626" font-weight="normal" textLength="26.56" lengthAdjust="spacingAndGlyphs">510</text>
<line x1="719.5" y1="89" x2="719.5" y2="229" stroke="#444" stroke-width="1" />
<path d="M716.5 226 L722.5 232" stroke="#000" stroke-width="1.5" fill="none" />
<text transform="translate(714.80,164.50) rotate(-90)" x="-0.93" y="0" font-size="15.43" fill="#262626" font-weight="normal" textLength="33.04" lengthAdjust="spacingAndGlyphs">3155</text>
<text transform="translate(733.50,164.00) rotate(-90)" x="-1.00" y="0" font-size="16.71" fill="#262626" font-weight="normal" textLength="31.97" lengthAdjust="spacingAndGlyphs">nom.</text>
<line x1="772.2" y1="89" x2="772.2" y2="141.8" stroke="#444" stroke-width="1" />
<path d="M769.2 138.8 L775.2 144.8" stroke="#000" stroke-width="1.5" fill="none" />
<text transform="translate(767.80,119.00) rotate(-90)" x="-0.93" y="0" font-size="15.57" fill="#262626" font-weight="normal" textLength="31.26" lengthAdjust="spacingAndGlyphs">1440</text>
<text transform="translate(786.80,120.00) rotate(-90)" x="-1.01" y="0" font-size="16.86" fill="#262626" font-weight="normal" textLength="31.69" lengthAdjust="spacingAndGlyphs">nom.</text>
<line x1="772.5" y1="102.4" x2="787.5" y2="102.4" stroke="#8a8a8a" stroke-width="3" />
<line x1="773" y1="102.4" x2="787.5" y2="102.4" stroke="#e0e0e0" stroke-width="1.6" />
<rect x="787.2" y="96.8" width="7.5" height="8" fill="#d8d8d8" stroke="#8a8a8a" stroke-width="0.9" rx="1"/>
<rect x="789.2" y="99.3" width="3.2" height="3.2" fill="none" stroke="#666" stroke-width="0.7" />
<path d="M803 141.8 H751.3 V169.8 H803" stroke="#333" stroke-width="1" fill="none" stroke-dasharray="3.5 2.5"/>
<path d="M752 142.8 L803 165.8" stroke="#333" stroke-width="0.9" fill="none" stroke-dasharray="5 4"/>
<path d="M803 229.7 H751.3 V258.9 H803" stroke="#333" stroke-width="1" fill="none" stroke-dasharray="3.5 2.5"/>
<path d="M752 230.7 L803 253.7" stroke="#333" stroke-width="0.9" fill="none" stroke-dasharray="5 4"/>
<text x="754.23" y="167.00" font-size="12.86" fill="#222" font-weight="normal" textLength="16.79" lengthAdjust="spacingAndGlyphs" >S/L</text>
<text x="754.23" y="255.00" font-size="12.86" fill="#222" font-weight="normal" textLength="16.79" lengthAdjust="spacingAndGlyphs" >S/L</text>
<text x="618.97" y="182.00" font-size="17.14" fill="#262626" font-weight="normal" textLength="59.71" lengthAdjust="spacingAndGlyphs" >LIVING</text>
<text x="627.31" y="196.00" font-size="11.43" fill="#262626" font-weight="normal" textLength="43.14" lengthAdjust="spacingAndGlyphs" >(CONC.)</text>
<rect x="619.8" y="205.7" width="58.9" height="15.7" fill="#fff" stroke="#444" stroke-width="1" />
<text x="621.75" y="218.30" font-size="12.57" fill="#262626" font-weight="normal" textLength="19.26" lengthAdjust="spacingAndGlyphs" >FFL</text>
<text x="647.25" y="218.30" font-size="12.57" fill="#262626" font-weight="normal" textLength="28.76" lengthAdjust="spacingAndGlyphs" >33.98</text>
<text x="750.45" y="199.00" font-size="17.57" fill="#262626" font-weight="normal" textLength="56.26" lengthAdjust="spacingAndGlyphs" >DININ</text>
<text x="761.81" y="214.00" font-size="11.43" fill="#262626" font-weight="normal" textLength="41.64" lengthAdjust="spacingAndGlyphs" >(CONC.</text>
<path d="M800 291.4 H703.8 V338" stroke="#333" stroke-width="1" fill="none" />
<line x1="704" y1="306.8" x2="800" y2="306.8" stroke="#888" stroke-width="1.6" stroke-dasharray="12 7"/>
<line x1="695.3" y1="291" x2="695.3" y2="398" stroke="#666" stroke-width="1" />
<path d="M692.3 288 L698.3 294" stroke="#000" stroke-width="1.5" fill="none" />
<path d="M692.3 335.5 L698.3 341.5" stroke="#000" stroke-width="1.5" fill="none" />
<path d="M692.3 395 L698.3 401" stroke="#000" stroke-width="1.5" fill="none" />
<text transform="translate(691.50,325.00) rotate(-90)" x="-0.96" y="0" font-size="16.00" fill="#262626" font-weight="normal" textLength="22.90" lengthAdjust="spacingAndGlyphs">900</text>
<text transform="translate(691.50,383.00) rotate(-90)" x="-0.96" y="0" font-size="16.00" fill="#262626" font-weight="normal" textLength="32.20" lengthAdjust="spacingAndGlyphs">1140</text>
<line x1="652" y1="338.3" x2="800" y2="338.3" stroke="#555" stroke-width="1.2" />
<line x1="666" y1="338.3" x2="800" y2="338.3" stroke="#000" stroke-width="3" stroke-dasharray="13.8 6" stroke-dashoffset="-5.5"/>
<text x="739.84" y="354.20" font-size="16.00" fill="#262626" font-weight="normal" textLength="65.80" lengthAdjust="spacingAndGlyphs" >KITCHE</text>
<text x="754.77" y="370.00" font-size="12.14" fill="#262626" font-weight="normal" textLength="42.71" lengthAdjust="spacingAndGlyphs" >(CONC.)</text>
<rect x="492" y="339" width="5.8" height="5.4" fill="#000" stroke="none" stroke-width="1" />
<rect x="493.5" y="333.5" width="3" height="5" fill="#bde0e2" stroke="none" stroke-width="1" />
<path d="M497.8 341.3 H540 V344.6 H497.8" stroke="#333" stroke-width="0.9" fill="none" />
<line x1="492.8" y1="338" x2="492.8" y2="386" stroke="#333" stroke-width="0.9" />
<path d="M540 345 A 45 45 0 0 1 495.5 386" stroke="#333" stroke-width="0.9" fill="none" />
<rect x="498.7" y="358.7" width="23.6" height="14.3" fill="#fff" stroke="#000" stroke-width="1" />
<text x="499.73" y="370.50" font-size="12.86" fill="#000" font-weight="bold" textLength="21.29" lengthAdjust="spacingAndGlyphs" >D11</text>
<line x1="492.8" y1="385" x2="492.8" y2="442" stroke="#000" stroke-width="2" />
<line x1="497.2" y1="385" x2="497.2" y2="429" stroke="#000" stroke-width="2" />
<rect x="491.8" y="385" width="6.4" height="7" fill="#000" stroke="none" stroke-width="1" />
<path d="M497.6 385 V428 H800" stroke="#000" stroke-width="2.4" fill="none" />
<line x1="492" y1="440.8" x2="800" y2="440.8" stroke="#000" stroke-width="1.8" />
<path d="M479.7 441 H514.7 M545.5 441 H580.5 M611.3 441 H646.3 M677.1 441 H712.1 M742.9 441 H777.9 M808.7 441 H843.7" stroke="#000" stroke-width="3" fill="none" />
<path d="M529.2 441 H531.2 M595.0 441 H597.0 M660.8 441 H662.8 M726.6 441 H728.6 M792.4 441 H794.4" stroke="#000" stroke-width="3" fill="none" />
<line x1="497" y1="396.6" x2="647.8" y2="396.6" stroke="#333" stroke-width="1" />
<line x1="497" y1="417.4" x2="647.8" y2="417.4" stroke="#444" stroke-width="1" stroke-dasharray="9 5"/>
<text x="479.99" y="430.00" font-size="8.57" fill="#262626" font-weight="normal" textLength="10.86" lengthAdjust="spacingAndGlyphs" >DP</text>
<circle cx="490" cy="436.5" r="2.6" stroke="#000" stroke-width="0.8" fill="#fff"/>
<text x="549.29" y="374.80" font-size="16.86" fill="#262626" font-weight="normal" textLength="44.29" lengthAdjust="spacingAndGlyphs" >W.I.P</text>
<text x="549.81" y="388.50" font-size="11.43" fill="#262626" font-weight="normal" textLength="42.64" lengthAdjust="spacingAndGlyphs" >(CONC.)</text>
<rect x="616" y="361.4" width="24" height="14.6" fill="#fff" stroke="#000" stroke-width="1" />
<text x="618.73" y="373.50" font-size="12.86" fill="#262626" font-weight="normal" textLength="18.29" lengthAdjust="spacingAndGlyphs" >D5</text>
<path d="M648 338 V376 M652.3 338 V376" stroke="#555" stroke-width="0.9" fill="none" stroke-dasharray="3 2"/>
<rect x="647" y="379.3" width="6" height="7" fill="#000" stroke="none" stroke-width="1" />
<path d="M648.1 379 V428 M652 379 V428" stroke="#000" stroke-width="1.8" fill="none" />
<rect x="648.8" y="412" width="2.5" height="16" fill="#bde0e2" stroke="none" stroke-width="1" />
<rect x="648.3" y="375.5" width="3.5" height="4" fill="#999" stroke="none" stroke-width="1" />
<rect x="653" y="397.4" width="30" height="29.6" fill="#fff" stroke="#000" stroke-width="2.2" />
<text x="655.27" y="417.00" font-size="12.14" fill="#262626" font-weight="normal" textLength="23.71" lengthAdjust="spacingAndGlyphs" >OVS</text>
<line x1="683.6" y1="396.6" x2="800" y2="396.6" stroke="#333" stroke-width="1" />
<line x1="683.6" y1="411.8" x2="800" y2="411.8" stroke="#444" stroke-width="1" stroke-dasharray="9 5"/>
<path d="M714.6 396.6 V427 M716.4 396.6 V427" stroke="#666" stroke-width="1" fill="none" />
<path d="M759 396.6 V427 M761.2 396.6 V427" stroke="#888" stroke-width="1.2" fill="none" />
<path d="M717 398.8 H759 M717 405.6 H759 M717 412.3 H759 M717 419.4 H759" stroke="#444" stroke-width="0.8" fill="none" />
<path d="M723 398.8 V427 M737.5 398.8 V427 M752.5 398.8 V427" stroke="#555" stroke-width="0.7" fill="none" />
<path d="M730 398.8 V427 M745 398.8 V427" stroke="#000" stroke-width="1.4" fill="none" />
<circle cx="752.5" cy="405.5" r="3.2" stroke="#000" stroke-width="0.9" fill="#fff"/>
<circle cx="723" cy="419" r="3.2" stroke="#000" stroke-width="0.9" fill="#fff"/>
<circle cx="752.5" cy="419.4" r="3.2" stroke="#000" stroke-width="0.9" fill="#fff"/>
<circle cx="723" cy="405.3" r="1" stroke="#000" stroke-width="0.9" fill="#fff"/>
<rect x="734.8" y="404" width="7" height="17" fill="#fff" stroke="#000" stroke-width="0.9" rx="3"/>
<path d="M738.3 404 V421" stroke="#555" stroke-width="0.7" fill="none" />
<circle cx="729.5" cy="399" r="1.3" stroke="#000" stroke-width="0.7" fill="#fff"/>
<circle cx="733" cy="399" r="1.3" stroke="#000" stroke-width="0.7" fill="#fff"/>
<circle cx="736.5" cy="399" r="1.3" stroke="#000" stroke-width="0.7" fill="#fff"/>
<circle cx="740" cy="399" r="1.3" stroke="#000" stroke-width="0.7" fill="#fff"/>
<circle cx="743.5" cy="399" r="1.3" stroke="#000" stroke-width="0.7" fill="#fff"/>
<text x="716.62" y="393.90" font-size="11.29" fill="#262626" font-weight="normal" textLength="38.13" lengthAdjust="spacingAndGlyphs" >STOVE</text>
<rect x="792.5" y="402" width="12" height="20.5" fill="#fff" stroke="#444" stroke-width="1" rx="2"/>
<text x="796.32" y="393.90" font-size="11.29" fill="#262626" font-weight="normal" textLength="10.13" lengthAdjust="spacingAndGlyphs" >S</text>
<path d="M282.5 441 H317.5 M348 441 H383.8 M414.7 441 H448.7 M479.7 441 H492" stroke="#858585" stroke-width="3.2" fill="none" stroke-linecap="round"/>
<circle cx="267.2" cy="441" r="1.6" stroke="#858585" stroke-width="0" fill="#858585"/>
<circle cx="332.7" cy="441" r="1.6" stroke="#858585" stroke-width="0" fill="#858585"/>
<circle cx="398.5" cy="441" r="1.6" stroke="#858585" stroke-width="0" fill="#858585"/>
<circle cx="464.4" cy="441" r="1.6" stroke="#858585" stroke-width="0" fill="#858585"/>
<text x="250.57" y="464.30" font-size="15.43" fill="#8a8a8a" font-weight="normal" textLength="150.64" lengthAdjust="spacingAndGlyphs" >NG FENCE 1.6m HIGH</text>
<line x1="319.2" y1="441" x2="319.2" y2="650" stroke="#9a9a9a" stroke-width="1.2" />
<line x1="350" y1="473.2" x2="800" y2="473.2" stroke="#777" stroke-width="1.2" />
<path d="M349.5 476.2 L355.5 470.2" stroke="#000" stroke-width="1.5" fill="none" />
<text x="492.81" y="468.20" font-size="13.14" fill="#262626" font-weight="normal" textLength="33.31" lengthAdjust="spacingAndGlyphs" >6109</text>
<text x="470.98" y="487.60" font-size="13.71" fill="#262626" font-weight="normal" textLength="78.57" lengthAdjust="spacingAndGlyphs" >ALFRESCO</text>
<text x="670.50" y="468.30" font-size="13.29" fill="#262626" font-weight="normal" textLength="24.83" lengthAdjust="spacingAndGlyphs" >600</text>
<text x="699.00" y="468.30" font-size="13.29" fill="#262626" font-weight="normal" textLength="23.73" lengthAdjust="spacingAndGlyphs" >150</text>
<path d="M665.8 471.2 L671.5 465.5 M697.3 475.5 L703 470 M704.8 474.7 L710.5 469.5" stroke="#111" stroke-width="1.5" fill="none" />
<text x="659.13" y="487.00" font-size="14.57" fill="#262626" font-weight="normal" textLength="47.46" lengthAdjust="spacingAndGlyphs" >STEPS</text>
<text x="784.20" y="468.30" font-size="13.29" fill="#262626" font-weight="normal" textLength="9.33" lengthAdjust="spacingAndGlyphs" >4</text>
<line x1="350" y1="509.5" x2="390" y2="509.5" stroke="#666" stroke-width="1" />
<path d="M349.5 512.5 L355.5 506.5" stroke="#000" stroke-width="1.5" fill="none" />
<path d="M385 512.5 L391 506.5" stroke="#000" stroke-width="1.5" fill="none" />
<text x="357.67" y="508.00" font-size="17.14" fill="#262626" font-weight="normal" textLength="41.41" lengthAdjust="spacingAndGlyphs" >70090</text>
<line x1="711" y1="509.8" x2="800" y2="509.8" stroke="#888" stroke-width="1.5" />
<line x1="397" y1="509.7" x2="704" y2="509.7" stroke="#9db9ee" stroke-width="3.6" />
<line x1="397" y1="509.7" x2="704" y2="509.7" stroke="#34569a" stroke-width="1.8" />
<text x="524.73" y="506.50" font-size="14.43" fill="#1d3578" font-weight="normal" textLength="49.64" lengthAdjust="spacingAndGlyphs" stroke="#1d3578" stroke-width="0.25">606899</text>
<text x="525.80" y="524.80" font-size="15.00" fill="#1d3578" font-weight="normal" textLength="48.60" lengthAdjust="spacingAndGlyphs" stroke="#1d3578" stroke-width="0.25">LIVING</text>
<rect x="389.4" y="506.4" width="7.8" height="7.5" fill="#0a84ff" stroke="#1a3f80" stroke-width="0.7" />
<rect x="546.5" y="506.5" width="7.8" height="7.5" fill="#0a84ff" stroke="#1a3f80" stroke-width="0.7" />
<rect x="703.8" y="506.2" width="7.8" height="7.5" fill="#0a84ff" stroke="#1a3f80" stroke-width="0.7" />
<text x="788.14" y="525.00" font-size="14.29" fill="#262626" font-weight="normal" textLength="12.43" lengthAdjust="spacingAndGlyphs" >D</text>
<line x1="339.5" y1="557.5" x2="800" y2="557.5" stroke="#333" stroke-width="1" />
<path d="M338.6 560.7 L345.0 554.3" stroke="#000" stroke-width="1.5" fill="none" />
<path d="M491 560 L497 554.5 M494 560 L500 554.5" stroke="#000" stroke-width="1" fill="none" />
<path d="M644.5 560 L650.5 554.5 M647.5 560 L653.5 554.5" stroke="#000" stroke-width="1" fill="none" />
<text x="400.28" y="553.50" font-size="15.29" fill="#262626" font-weight="normal" textLength="32.53" lengthAdjust="spacingAndGlyphs" >2910</text>
<text x="485.48" y="553.50" font-size="15.29" fill="#262626" font-weight="normal" textLength="17.13" lengthAdjust="spacingAndGlyphs" >90</text>
<text x="554.98" y="553.50" font-size="15.29" fill="#262626" font-weight="normal" textLength="32.93" lengthAdjust="spacingAndGlyphs" >2900</text>
<text x="640.08" y="553.50" font-size="15.29" fill="#262626" font-weight="normal" textLength="17.33" lengthAdjust="spacingAndGlyphs" >90</text>
<text x="770.08" y="553.50" font-size="15.29" fill="#262626" font-weight="normal" textLength="36.53" lengthAdjust="spacingAndGlyphs" >5200</text>
<text x="553.89" y="572.00" font-size="15.14" fill="#262626" font-weight="normal" textLength="36.21" lengthAdjust="spacingAndGlyphs" >W.I.P</text>
<text x="754.49" y="572.00" font-size="15.14" fill="#262626" font-weight="normal" textLength="46.11" lengthAdjust="spacingAndGlyphs" >KITCH</text>
<text x="574.04" y="637.60" font-size="16.00" fill="#262626" font-weight="normal" textLength="10.60" lengthAdjust="spacingAndGlyphs" >6</text>
<line x1="256" y1="650.3" x2="800" y2="650.3" stroke="#7a7a7a" stroke-width="1.6" />
<path d="M267.5 602 V665.3 H304 Z" stroke="#2b62f0" stroke-width="1" fill="none" />
<path d="M267.5 659 H274 V665.3" stroke="#2b62f0" stroke-width="1" fill="none" />
<path d="M267.5 621 L273 626 L279.5 620 M273 626 V631" stroke="#2b62f0" stroke-width="1" fill="none" />
<path d="M288 655 L298 665 M298 655 L289 664" stroke="#2b62f0" stroke-width="1" fill="none" />
</svg>
<!--/DRAW-->
</div>


<!-- COMMAND LINE -->
<div class="a" style="left:413px;top:657.3px;width:40px;height:12px;background:linear-gradient(#8a8a8a,#9c9c9c);border-radius:2px 0 0 0"></div>
<svg class="a" style="left:413px;top:657px" width="42" height="12">
 <path d="M3.5 3 v9 M6 3 v9" stroke="#b9b9b9" stroke-width="1.3" stroke-dasharray="1 1"/>
 <path d="M12 7 L17 12 M17 7 L12 12" stroke="#fff" stroke-width="1.5"/>
 <path d="M27 5 a2.5 2.5 0 1 0 3 3 l5 5" stroke="#fff" stroke-width="2" fill="none"/>
</svg>
<div class="a" style="left:453px;top:657.3px;width:206.5px;height:13px;background:#fff;border:1px solid #a9a9a9;border-left:none;border-radius:0 3px 0 0"></div>
<div class="a" style="left:456.5px;top:661px;width:11px;height:9px;background:#dde2ea;border:1px solid #b8c0cc;border-radius:1px"></div>
<svg class="a" style="left:459px;top:662px" width="8" height="8"><path d="M2 1.5 L5 4.5 L2 7.5" stroke="#4b5c7a" stroke-width="1.2" fill="none"/></svg>
<div class="arr" style="left:470.5px;top:665px;border-left-width:2.5px;border-right-width:2.5px;border-top-width:3px;border-top-color:#888"></div>
<div class="a" style="left:480px;top:661px;font-size:9px;line-height:10px;color:#b0b0b0;font-style:italic;letter-spacing:0.6px">Type a command</div>
<div class="a" style="left:651px;top:665px;width:0;height:0;border-left:3px solid transparent;border-right:3px solid transparent;border-bottom:3px solid #444"></div>

</body></html>
